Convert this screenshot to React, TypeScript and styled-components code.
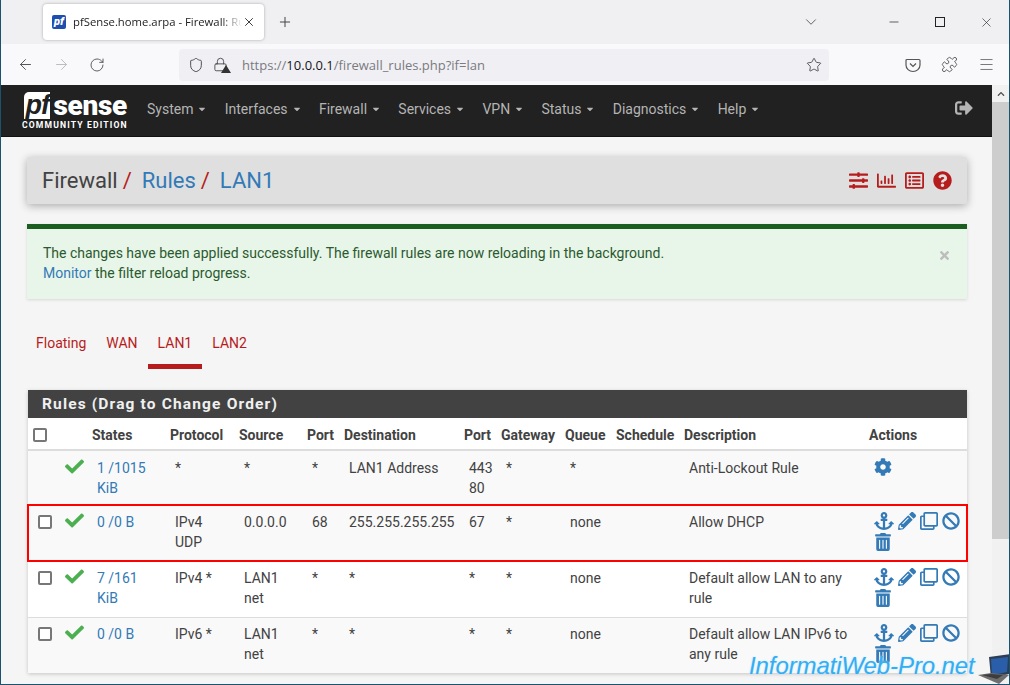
import React from "react";
import styled, { createGlobalStyle } from "styled-components";
import { ArrowLeft, ArrowRight, RotateCw, Shield, Star, Puzzle, Menu, ChevronDown, X, Minus, Plus, Lock } from "lucide-react";
import { FaSlidersH, FaRegChartBar, FaRegListAlt, FaQuestionCircle, FaCheck, FaCog, FaAnchor, FaPencilAlt, FaRegClone, FaBan, FaTrashAlt, FaSignOutAlt, FaCaretDown, FaChevronUp, FaTimes } from "react-icons/fa";

const Global = createGlobalStyle`
  html, body { margin: 0; padding: 0; background: #f5f5f5; }
  * { box-sizing: border-box; }
`;

const Frame = styled.div`
  position: relative;
  width: 1010px;
  height: 685px;
  overflow: hidden;
  display: flex;
  flex-direction: column;
  border: solid #1b536f;
  border-width: 0 1px 1px 1px;
  font-family: Roboto, "Liberation Sans", sans-serif;
  font-size: 14px;
  line-height: 20px;
  color: #424242;
`;

const TabStrip = styled.div`
  height: 44px;
  flex: none;
  background: #f0f0f2;
  display: flex;
  align-items: center;
  padding-left: 42px;
  color: #333;
`;

const BrowserTab = styled.div`
  width: 221px;
  height: 36px;
  background: #fff;
  border-radius: 4px;
  box-shadow: 0 0 3px rgba(0, 0, 0, 0.3);
  display: flex;
  align-items: center;
  padding: 0 8px 0 9px;
  font-family: "Open Sans", "Liberation Sans", sans-serif;
  font-size: 11.3px;
  color: #222;
`;

const Favicon = styled.span`
  width: 14px;
  height: 14px;
  flex: none;
  border-radius: 2px;
  background: #1e4fb0;
  color: #fff;
  font: italic 900 11px/14px Roboto, sans-serif;
  text-align: center;
  margin-right: 7px;
`;

const TabTitle = styled.span`
  flex: 1;
  overflow: hidden;
  white-space: nowrap;
  -webkit-mask-image: linear-gradient(to right, #000 88%, transparent 100%);
  mask-image: linear-gradient(to right, #000 88%, transparent 100%);
`;

const NewTab = styled.span`
  display: flex;
  margin-left: 13px;
  color: #444;
`;

const StripRight = styled.div`
  margin-left: auto;
  display: flex;
  align-items: center;
  color: #222;
`;

const AllTabs = styled.span`
  display: flex;
  margin-right: 51px;
  color: #555;
`;

const WindowButton = styled.span`
  width: 46px;
  display: flex;
  justify-content: center;
`;

const MaximizeBox = styled.span`
  width: 10px;
  height: 10px;
  border: 1px solid #222;
`;

const Toolbar = styled.div`
  height: 41px;
  flex: none;
  background: #f9f9fb;
  display: flex;
  align-items: center;
  color: #555;
  padding-left: 16px;
`;

const NavButton = styled.span<{ $faded?: boolean }>`
  display: flex;
  margin-right: 19px;
  color: ${(p) => (p.$faded ? "#bcbcc0" : "#555")};
`;

const UrlBar = styled.div`
  width: 650px;
  height: 32px;
  margin-left: 55px;
  border-radius: 4px;
  background: #f0f0f4;
  display: flex;
  align-items: center;
  padding: 0 7px 0 9px;
  font-family: "Open Sans", "Liberation Sans", sans-serif;
  font-size: 13px;
  color: #7a7a80;
`;

const UrlHost = styled.span`
  color: #15141a;
`;

const UrlIcon = styled.span`
  position: relative;
  display: flex;
  margin-right: 9px;
  color: #444;
`;

const UrlText = styled.span`
  margin-left: 5px;
`;

const LockWarn = styled.span`
  position: absolute;
  right: -3px;
  bottom: -1px;
  width: 0;
  height: 0;
  border: 5px solid transparent;
  border-top: 0;
  border-bottom: 8px solid #333;
`;

const UrlStar = styled.span`
  margin-left: auto;
  display: flex;
  color: #444;
`;

const ToolbarRight = styled.div`
  display: flex;
  align-items: center;
  margin-left: 76px;
  gap: 20px;
  color: #555;
`;

const Body = styled.div`
  flex: 1;
  display: flex;
  min-height: 0;
`;

const Page = styled.div`
  flex: 1;
  min-width: 0;
  background: #f5f5f5;
`;

const Scrollbar = styled.div`
  width: 17px;
  flex: none;
  background: #f1f1f1;
  display: flex;
  flex-direction: column;
  color: #505050;
`;

const ScrollArrow = styled.div`
  height: 17px;
  display: flex;
  align-items: center;
  justify-content: center;
  font-size: 8px;
`;

const ScrollThumb = styled.div`
  height: 437px;
  background: #cdcdcd;
`;

const Navbar = styled.nav`
  height: 52px;
  background: #212121;
  border-bottom: 1px solid #111;
  display: flex;
  align-items: center;
  padding-left: 21px;
  color: #fff;
`;

const Logo = styled.div`
  width: 105px;
  flex: none;
  margin-right: 20px;
  display: flex;
  flex-direction: column;
`;

const LogoTop = styled.div`
  display: flex;
  align-items: center;
  height: 29px;
`;

const LogoMark = styled.span`
  width: 29px;
  height: 27px;
  margin-left: 2px;
  background: #fff;
  border-radius: 5px 0 0 0;
  color: #212121;
  font: italic 900 27px/27px "Liberation Sans", sans-serif;
  letter-spacing: -1px;
  text-align: center;
`;

const LogoWord = styled.span`
  font: 900 28px/29px Roboto, sans-serif;
  letter-spacing: -0.3px;
  margin-left: 3px;
`;

const LogoSub = styled.span`
  font: 700 8.6px/11px Roboto, sans-serif;
  letter-spacing: 1.15px;
  white-space: nowrap;
`;

const NavItem = styled.span`
  display: flex;
  align-items: center;
  color: #b4b4b4;
  font-size: 14px;
  margin: 0 17.3px 4px 0;
  white-space: nowrap;
`;

const Caret = styled(FaCaretDown)`
  margin-left: 4px;
  font-size: 10px;
`;

const LogoutIcon = styled.span`
  margin: 0 19px 6px auto;
  display: flex;
  color: #b4b4b4;
  font-size: 18px;
`;

const Content = styled.main`
  padding: 20px 25px 0 26px;
`;

const PageHeader = styled.header`
  height: 47px;
  background: #dfdfdf;
  border-radius: 2px;
  box-shadow: 0 2px 8px rgba(0, 0, 0, 0.3);
  display: flex;
  align-items: center;
  justify-content: space-between;
  padding: 0 15px;
`;

const Title = styled.h1`
  margin: 0;
  font-size: 22px;
  font-weight: 400;
  line-height: 30px;
  color: #424242;
`;

const TitleLink = styled.a`
  color: #337ab7;
  margin-left: 10px;
`;

const Slash = styled.span`
  color: #b71c1c;
  margin-left: 5px;
`;

const HeaderIcons = styled.div`
  display: flex;
  align-items: center;
  gap: 9px;
  color: #b71c1c;
  font-size: 19px;
`;

const Alert = styled.section`
  position: relative;
  margin-top: 20px;
  height: 75px;
  background: #e8f5e9;
  border-top: 5px solid #1b5e20;
  padding: 14px 15px 15px 16px;
  color: #2b5a2e;
  box-shadow: 0 1px 3px rgba(0, 0, 0, 0.12);
`;

const AlertLink = styled.a`
  color: #337ab7;
`;

const CloseAlert = styled.span`
  position: absolute;
  right: 16px;
  top: 20px;
  color: #bdbdbd;
  font-size: 13px;
  display: flex;
`;

const Tabs = styled.ul`
  list-style: none;
  margin: 31px 0 0 -1px;
  padding: 0;
  display: flex;
  height: 39px;
`;

const TabItem = styled.li<{ $active?: boolean }>`
  padding: 3px 10px 0;
  color: #b71c1c;
  height: 39px;
  font-size: 14px;
  border-bottom: 5px solid ${(p) => (p.$active ? "#b71c1c" : "transparent")};
`;

const Panel = styled.section`
  margin: 21px 0 0 1px;
  background: #fff;
  box-shadow: 0 1px 4px rgba(0, 0, 0, 0.2);
`;

const PanelHeading = styled.h2`
  margin: 0;
  height: 28px;
  background: #424242;
  color: #f0f0f0;
  font-size: 15.5px;
  line-height: 28px;
  font-weight: 700;
  letter-spacing: 1.15px;
  padding-left: 14px;
`;

const Table = styled.table`
  width: 939px;
  table-layout: fixed;
  border-collapse: separate;
  border-spacing: 0;
`;

const Th = styled.th`
  height: 33px;
  padding: 2px 0 0;
  text-align: left;
  font-weight: 700;
  font-size: 14px;
  color: #424242;
  border-bottom: 2px solid #ddd;
  white-space: nowrap;
  &:first-child {
    padding-left: 5px;
  }
`;

const Tr = styled.tr<{ $white?: boolean; $marked?: boolean }>`
  background: ${(p) => (p.$white ? "#fff" : "#f9f9f9")};
  outline: ${(p) => (p.$marked ? "2px solid #f00" : "none")};
  outline-offset: -1px;
  td {
    border-top: 1px solid #ddd;
  }
  &:first-child td {
    border-top: 0;
    padding-top: 7px;
  }
`;

const Td = styled.td`
  padding: 6px 12px 7px 5px;
  vertical-align: top;
  color: #424242;
  &:first-child {
    padding-left: 10px;
  }
`;

const ActionCell = styled(Td)`
  padding-right: 5px;
`;

const Checkbox = styled.input.attrs({ type: "checkbox" })`
  appearance: none;
  display: block;
  width: 14px;
  height: 14px;
  margin: 3px 0 0;
  background: #fff;
  border: 2px solid #777;
  border-radius: 2px;
`;

const HeadCheckbox = styled(Checkbox)`
  margin: 0;
`;

const CheckIcon = styled(FaCheck)`
  display: block;
  color: #4caf50;
  font-size: 19px;
  margin-top: -1px;
`;

const StateLink = styled.a`
  color: #337ab7;
`;

const Actions = styled.div`
  display: flex;
  flex-wrap: wrap;
  row-gap: 3px;
  column-gap: 4px;
  color: #337ab7;
  font-size: 18px;
  height: 42px;
  align-content: flex-start;
  & > svg {
    flex: none;
    width: 18px;
    height: 18px;
  }
  & > svg:first-child {
    width: 20px;
  }
`;

const Gear = styled(FaCog)`
  display: block;
  color: #337ab7;
  font-size: 18px;
`;

const Watermark = styled.div`
  position: absolute;
  left: 748px;
  top: 651px;
  font: italic 400 24px/30px "Liberation Sans", sans-serif;
  letter-spacing: -0.1px;
  color: #33aef2;
  text-shadow: 0 0 2px #b7e3ff;
  white-space: nowrap;
`;

const LaptopSvg = styled.svg`
  position: absolute;
  left: 975px;
  top: 654px;
`;

const PocketIcon = () => (
  <svg width="16" height="16" viewBox="0 0 16 16" fill="none" stroke="currentColor" strokeWidth="1.2">
    <path d="M2 2.5h12a1 1 0 0 1 1 1V8a7 6.5 0 0 1-14 0V3.5a1 1 0 0 1 1-1z" />
    <path d="M5 6.5l3 3 3-3" />
  </svg>
);

const Laptop = () => (
  <LaptopSvg width="36" height="30" viewBox="0 0 36 30">
    <path d="M13 3l21-3-1 20-18 4z" fill="#2c3e55" />
    <path d="M15 5l17-2-1 15-15 3z" fill="#2b5ea8" />
    <path d="M2 21l13-2 18 2-10 9z" fill="#6e6e6e" />
    <path d="M6 21l9-1 12 1-6 4z" fill="#3d3d3d" />
  </LaptopSvg>
);

const navItems = ["System", "Interfaces", "Firewall", "Services", "VPN", "Status", "Diagnostics", "Help"];

type Rule = {
  tone?: boolean;
  marked?: boolean;
  check: boolean;
  states: string;
  proto: string;
  src: string;
  sport: string;
  dst: string;
  dport: React.ReactNode;
  queue: string;
  desc: string;
  gear?: boolean;
};

const rules: Rule[] = [
  { check: false, states: "1 /1015 KiB", proto: "*", src: "*", sport: "*", dst: "LAN1 Address", dport: <>443<br />80</>, queue: "*", desc: "Anti-Lockout Rule", gear: true },
  { check: true, marked: true, states: "0 /0 B", proto: "IPv4 UDP", src: "0.0.0.0", sport: "68", dst: "255.255.255.255", dport: "67", queue: "none", desc: "Allow DHCP" },
  { check: true, tone: true, states: "7 /161 KiB", proto: "IPv4 *", src: "LAN1 net", sport: "*", dst: "*", dport: "*", queue: "none", desc: "Default allow LAN to any rule" },
  { check: true, states: "0 /0 B", proto: "IPv6 *", src: "LAN1 net", sport: "*", dst: "*", dport: "*", queue: "none", desc: "Default allow LAN IPv6 to any rule" },
];

const columns = [32, 32, 78, 69, 68, 37, 120, 37, 64, 51, 68, 185, 98];
const heads = ["", "", "States", "Protocol", "Source", "Port", "Destination", "Port", "Gateway", "Queue", "Schedule", "Description", "Actions"];

export default function App() {
  return (
    <Frame>
      <Global />
      <TabStrip>
        <BrowserTab>
          <Favicon>pf</Favicon>
          <TabTitle>pfSense.home.arpa - Firewall: Rules: LAN1</TabTitle>
          <X size={14} strokeWidth={1.5} />
        </BrowserTab>
        <NewTab><Plus size={16} strokeWidth={1.5} /></NewTab>
        <StripRight>
          <AllTabs><ChevronDown size={18} strokeWidth={1.2} /></AllTabs>
          <WindowButton><Minus size={14} strokeWidth={1.2} /></WindowButton>
          <WindowButton><MaximizeBox /></WindowButton>
          <WindowButton><X size={15} strokeWidth={1} /></WindowButton>
        </StripRight>
      </TabStrip>
      <Toolbar>
        <NavButton><ArrowLeft size={17} strokeWidth={1.4} /></NavButton>
        <NavButton $faded><ArrowRight size={17} strokeWidth={1.4} /></NavButton>
        <NavButton><RotateCw size={16} strokeWidth={1.4} /></NavButton>
        <UrlBar>
          <UrlIcon><Shield size={16} strokeWidth={1.4} /></UrlIcon>
          <UrlIcon><Lock size={15} strokeWidth={1.4} /><LockWarn /></UrlIcon>
          <UrlText>https://<UrlHost>10.0.0.1</UrlHost>/firewall_rules.php?if=lan</UrlText>
          <UrlStar><Star size={16} strokeWidth={1.3} /></UrlStar>
        </UrlBar>
        <ToolbarRight>
          <PocketIcon />
          <Puzzle size={17} strokeWidth={1.3} />
          <Menu size={17} strokeWidth={1.1} />
        </ToolbarRight>
      </Toolbar>
      <Body>
        <Page>
          <Navbar>
            <Logo>
              <LogoTop>
                <LogoMark>pf</LogoMark>
                <LogoWord>sense</LogoWord>
              </LogoTop>
              <LogoSub>COMMUNITY EDITION</LogoSub>
            </Logo>
            {navItems.map((n) => (
              <NavItem key={n}>{n}<Caret /></NavItem>
            ))}
            <LogoutIcon><FaSignOutAlt /></LogoutIcon>
          </Navbar>
          <Content>
            <PageHeader>
              <Title>
                Firewall<Slash>/</Slash>
                <TitleLink>Rules</TitleLink><Slash>/</Slash>
                <TitleLink>LAN1</TitleLink>
              </Title>
              <HeaderIcons>
                <FaSlidersH />
                <FaRegChartBar />
                <FaRegListAlt />
                <FaQuestionCircle />
              </HeaderIcons>
            </PageHeader>
            <Alert>
              The changes have been applied successfully. The firewall rules are now reloading in the background.
              <br />
              <AlertLink>Monitor</AlertLink> the filter reload progress.
              <CloseAlert><FaTimes /></CloseAlert>
            </Alert>
            <Tabs>
              <TabItem>Floating</TabItem>
              <TabItem>WAN</TabItem>
              <TabItem $active>LAN1</TabItem>
              <TabItem>LAN2</TabItem>
            </Tabs>
            <Panel>
              <PanelHeading>Rules (Drag to Change Order)</PanelHeading>
              <Table>
                <colgroup>
                  {columns.map((w, i) => <col key={i} width={w} />)}
                </colgroup>
                <thead>
                  <tr>
                    {heads.map((h, i) => (
                      <Th key={i}>{i === 0 ? <HeadCheckbox /> : h}</Th>
                    ))}
                  </tr>
                </thead>
                <tbody>
                  {rules.map((r, i) => (
                    <Tr key={i} $white={r.tone} $marked={r.marked}>
                      <Td>{r.check && <Checkbox />}</Td>
                      <Td><CheckIcon /></Td>
                      <Td><StateLink>{r.states}</StateLink></Td>
                      <Td>{r.proto}</Td>
                      <Td>{r.src}</Td>
                      <Td>{r.sport}</Td>
                      <Td>{r.dst}</Td>
                      <Td>{r.dport}</Td>
                      <Td>*</Td>
                      <Td>{r.queue}</Td>
                      <Td></Td>
                      <Td>{r.desc}</Td>
                      <ActionCell>
                        {r.gear ? <Gear /> : (
                          <Actions>
                            <FaAnchor />
                            <FaPencilAlt />
                            <FaRegClone />
                            <FaBan />
                            <FaTrashAlt />
                          </Actions>
                        )}
                      </ActionCell>
                    </Tr>
                  ))}
                </tbody>
              </Table>
            </Panel>
          </Content>
        </Page>
        <Scrollbar>
          <ScrollArrow><FaChevronUp /></ScrollArrow>
          <ScrollThumb />
        </Scrollbar>
      </Body>
      <Watermark>InformatiWeb-Pro.net</Watermark>
      <Laptop />
    </Frame>
  );
}
